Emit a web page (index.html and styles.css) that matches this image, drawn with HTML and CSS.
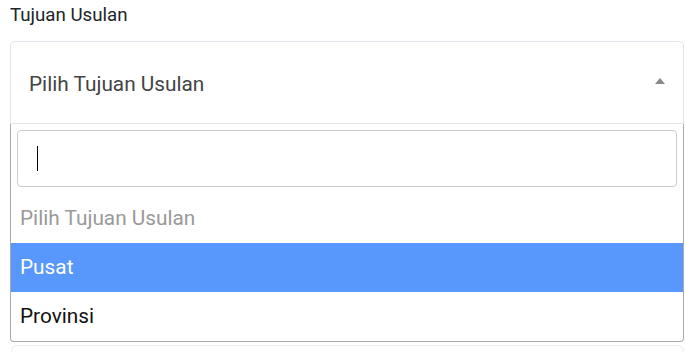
FILE: index.html
```html
<!DOCTYPE html>
<html lang="en">
<head>
    <meta charset="UTF-8">
    <meta name="viewport" content="width=device-width, initial-scale=1.0">
    <title>Tujuan Usulan</title>
    <link rel="stylesheet" href="styles.css">
</head>
<body>

    <div class="form-group">
        <label class="form-label">Tujuan Usulan</label>

        <div class="select-box">
            <span class="select-text">Pilih Tujuan Usulan</span>
            <span class="select-arrow"></span>
        </div>

        <div class="dropdown">
            <div class="search-wrap">
                <div class="search-field"><span class="caret"></span></div>
            </div>
            <ul class="options">
                <li class="option placeholder">Pilih Tujuan Usulan</li>
                <li class="option active">Pusat</li>
                <li class="option">Provinsi</li>
            </ul>
        </div>

        <div class="next-field"></div>
    </div>

</body>
</html>
```

FILE: styles.css
```css
/* Global Styles */
body {
    font-family: Roboto, "Liberation Sans", Arial, sans-serif;
    background: #fff;
    margin: 0;
}

/* Wrapper */
.form-group {
    width: 674px;
    padding: 0 1px 0 10px;
}

/* Label */
.form-label {
    display: block;
    font-size: 18.7px;
    line-height: 24px;
    color: #212529;
    padding-top: 3px;
    margin-bottom: 14px;
}

/* Closed select */
.select-box {
    display: flex;
    justify-content: space-between;
    align-items: center;
    height: 81px;
    padding: 0 18px 0 18px;
    border: 1px solid #e3e3eb;
    border-radius: 5px 5px 0 0;
    font-size: 20.8px;
    color: #444;
}

.select-text {
    padding-top: 3px;
}

.select-arrow {
    width: 0;
    height: 0;
    border-left: 5.5px solid transparent;
    border-right: 5.5px solid transparent;
    border-bottom: 6px solid #888;
    margin-top: -4px;
}

/* Dropdown */
.dropdown {
    border: 1px solid #aaa;
    border-top: none;
    border-radius: 0 0 4px 4px;
    background: white;
}

.search-wrap {
    padding: 6px 6px 7px;
}

.search-field {
    height: 55px;
    border: 1px solid #ccc;
    border-radius: 4px;
    display: flex;
    align-items: center;
    padding-left: 19px;
}

.caret {
    width: 1px;
    height: 25px;
    background: #000;
    margin-top: -1px;
}

.options {
    list-style: none;
    margin: 0;
    padding: 0;
}

.option {
    height: 49px;
    line-height: 49px;
    padding-left: 9px;
    font-size: 20.8px;
    color: #111;
}

.option.placeholder {
    color: #999;
}

.option.active {
    background-color: #5897fb;
    color: white;
}

/* Next field peeking below */
.next-field {
    margin-top: 3px;
    height: 20px;
    border: 1px solid #ececf0;
    border-radius: 6px;
    margin-left: 1px;
}
```
